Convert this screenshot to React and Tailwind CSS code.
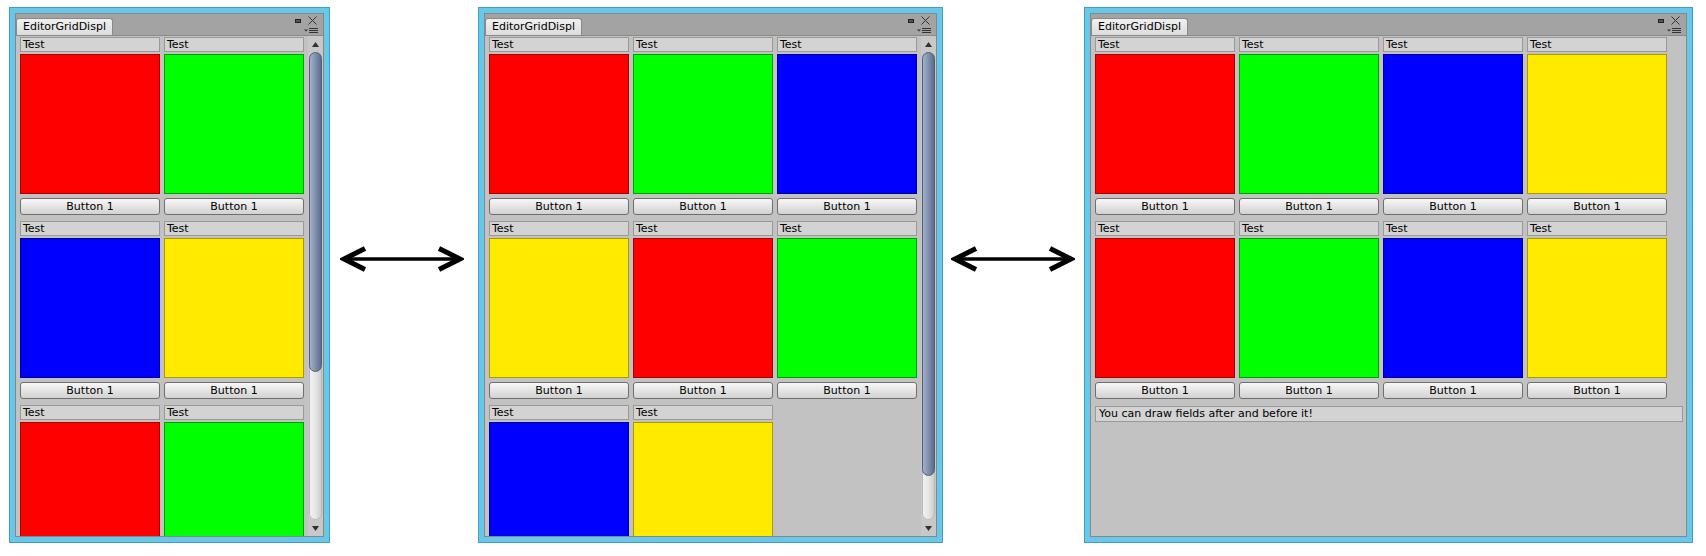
import React from 'react';

const swatches = {
  red: 'bg-[#ff0000] border-[#a80000]',
  green: 'bg-[#00ff00] border-[#00a000]',
  blue: 'bg-[#0000ff] border-[#000090]',
  yellow: 'bg-[#ffea00] border-[#a89a00]',
};

const order = ['red', 'green', 'blue', 'yellow'];

// cells in a row that runs past the bottom edge are drawn without their button
const Cell = ({ color, clipped }) => (
  <div className="flex flex-col">
    <div className="h-[15px] border border-[#999999] bg-[#d3d3d3] pl-[2px] text-[11px] leading-[13px] text-black">
      Test
    </div>
    <div className={`mt-[2px] h-[140px] w-[140px] border ${swatches[color]}`} />
    {!clipped && (
      <button className="mt-[4px] h-[17px] rounded-[3px] border border-[#6f6f6f] bg-gradient-to-b from-[#f7f7f7] to-[#d2d2d2] text-[11px] leading-[14px] text-black">
        Button 1
      </button>
    )}
  </div>
);

const ScrollBar = ({ thumb }) => (
  <div className="ml-[4px] flex w-[15px] flex-col items-center bg-[#c8c8c8]">
    <div className="flex h-[16px] items-center justify-center">
      <svg width="7" height="5" viewBox="0 0 7 5">
        <path d="M0 5L3.5 0L7 5Z" fill="#303030" />
      </svg>
    </div>
    <div className="flex w-[13px] flex-1 flex-col rounded-full bg-gradient-to-r from-[#f4f4f4] via-[#e6e6e6] to-[#c9c9c9] shadow-[inset_0_0_0_1px_#b8b8b8]">
      <div className={`${thumb} w-full rounded-full border border-[#4f5e7a] bg-gradient-to-r from-[#a4b2c8] via-[#7f90ad] to-[#5c6d8c]`} />
    </div>
    <div className="flex h-[16px] items-center justify-center">
      <svg width="7" height="5" viewBox="0 0 7 5">
        <path d="M0 0L3.5 5L7 0Z" fill="#303030" />
      </svg>
    </div>
  </div>
);

const EditorWindow = ({ width, gridCols, count, visible, thumb, footer }) => (
  <div className={`${width} h-[536px] shrink-0 border border-[#3f9ec2] bg-[#67c8ea] p-[5px]`}>
    <div className="flex h-full flex-col overflow-hidden border border-[#878787] bg-[#c2c2c2] font-['DejaVu_Sans',sans-serif]">
      <div className="relative flex h-[22px] shrink-0 items-end border-b border-[#8a8a8a] bg-[#a3a3a3]">
        <div className="h-[17px] rounded-t-[3px] border border-b-0 border-[#8a8a8a] bg-gradient-to-b from-[#f0f0f0] to-[#dcdcdc] px-[6px] text-[11px] leading-[15px] text-black">
          EditorGridDispl
        </div>
        <div className="absolute right-[22px] top-[5px] h-[4px] w-[6px] border border-[#222222] bg-[#555555]" />
        <svg className="absolute right-[6px] top-[2px]" width="9" height="9" viewBox="0 0 9 9">
          <path d="M0.5 0.5L8.5 8.5M8.5 0.5L0.5 8.5" stroke="#333333" strokeWidth="1" />
        </svg>
        <svg className="absolute right-[4px] top-[14px]" width="15" height="6" viewBox="0 0 15 6">
          <path d="M0 1.5H4L2 3.5Z" fill="#333333" />
          <path d="M5 0.5H14M5 2.5H14M5 4.5H14" stroke="#333333" strokeWidth="1" />
        </svg>
      </div>
      <div className="flex min-h-0 flex-1">
        <div className={`flex min-w-0 flex-1 flex-col pl-[4px] pt-[1px] ${footer ? 'pr-[3px]' : ''}`}>
          <div className={`grid ${gridCols} gap-x-[4px] gap-y-[6px]`}>
            {Array.from({ length: count }, (_, i) => (
              <Cell key={i} color={order[i % 4]} clipped={i >= visible} />
            ))}
          </div>
          {footer && (
            <div className="mt-[7px] h-[16px] border border-[#999999] bg-[#d3d3d3] pl-[3px] text-[11px] leading-[14px] text-black">
              {footer}
            </div>
          )}
        </div>
        {thumb && <ScrollBar thumb={thumb} />}
      </div>
    </div>
  </div>
);

const Arrow = ({ pad }) => (
  <div className={`flex shrink-0 pt-[238px] ${pad}`}>
    <svg width="124" height="28" viewBox="0 0 124 28">
      <path d="M4 14H120" stroke="#000000" strokeWidth="3.5" />
      <path d="M25 3.5L4 14L25 24.5" fill="none" stroke="#000000" strokeWidth="5" strokeLinejoin="miter" />
      <path d="M99 3.5L120 14L99 24.5" fill="none" stroke="#000000" strokeWidth="5" strokeLinejoin="miter" />
    </svg>
  </div>
);

export default function App() {
  return (
    <div className="flex h-[556px] w-[1706px] items-start bg-white pl-[9px] pt-[7px]">
      <EditorWindow width="w-[321px]" gridCols="grid-cols-[repeat(2,140px)]" count={6} visible={4} thumb="h-[320px]" />
      <Arrow pad="w-[148px] pl-[10px]" />
      <EditorWindow width="w-[465px]" gridCols="grid-cols-[repeat(3,140px)]" count={8} visible={6} thumb="h-[424px]" />
      <Arrow pad="w-[141px] pl-[8px]" />
      <EditorWindow
        width="w-[609px]"
        gridCols="grid-cols-[repeat(4,140px)]"
        count={8}
        visible={8}
        footer="You can draw fields after and before it!"
      />
    </div>
  );
}
